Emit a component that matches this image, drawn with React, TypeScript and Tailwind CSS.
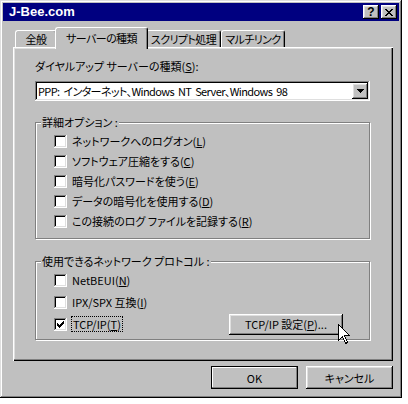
import React from "react";

const jp = "[font-family:'Noto_Sans_CJK_JP','Noto_Sans',sans-serif] [font-feature-settings:'palt']";
const raisedBtn =
  "shadow-[inset_-1px_-1px_0_#000,inset_1px_1px_0_#fff,inset_-2px_-2px_0_#808080,inset_2px_2px_0_#dfdfdf]";
const sunken =
  "shadow-[inset_-1px_-1px_0_#fff,inset_1px_1px_0_#808080,inset_-2px_-2px_0_#dfdfdf,inset_2px_2px_0_#000]";
const etched = "border border-[#808080] shadow-[1px_1px_0_#fff,inset_1px_1px_0_#fff]";

function Key({ k }: { k: string }) {
  return (
    <>
      (<span className="underline underline-offset-[1px]">{k}</span>)
    </>
  );
}

function CheckBox({ checked }: { checked?: boolean }) {
  return (
    <span className={`relative inline-block h-[13px] w-[13px] shrink-0 bg-white ${sunken}`}>
      {checked ? (
        <svg className="absolute left-[3px] top-[3px]" width="7" height="7" viewBox="0 0 7 7" shapeRendering="crispEdges">
          <rect x="6" y="0" width="1" height="1" />
          <rect x="5" y="1" width="2" height="1" />
          <rect x="0" y="2" width="1" height="1" />
          <rect x="4" y="2" width="3" height="1" />
          <rect x="0" y="3" width="2" height="1" />
          <rect x="3" y="3" width="3" height="1" />
          <rect x="0" y="4" width="5" height="1" />
          <rect x="1" y="5" width="3" height="1" />
          <rect x="2" y="6" width="1" height="1" />
        </svg>
      ) : null}
    </span>
  );
}

function Option({ children, checked, focus }: { children: React.ReactNode; checked?: boolean; focus?: boolean }) {
  return (
    <div className="flex items-center gap-[5px]">
      <CheckBox checked={checked} />
      <span className={focus ? "px-[1px] outline outline-1 outline-dotted outline-black" : ""}>{children}</span>
    </div>
  );
}

function Tab({ label, active, w }: { label: string; active?: boolean; w: string }) {
  return (
    <div
      className={`${w} flex items-start justify-center whitespace-nowrap rounded-t-[3px] border-l border-t border-r border-l-white border-t-white border-r-black bg-[#c0c0c0] shadow-[inset_-1px_0_0_#808080] ${
        active ? "relative z-10 -mx-[2px] -mb-[2px] h-[22px] pt-[3px]" : "h-[17px] pt-[1px]"
      }`}
    >
      {label}
    </div>
  );
}

export default function App() {
  return (
    <div className={`h-[404px] w-[408px] bg-white text-[11px] leading-[14px] text-black ${jp}`}>
      <div
        className={`flex h-[398px] w-[402px] flex-col bg-[#c0c0c0] p-[3px] shadow-[inset_-1px_-1px_0_#000,inset_1px_1px_0_#dfdfdf,inset_-2px_-2px_0_#808080,inset_2px_2px_0_#fff]`}
      >
        {/* title bar */}
        <div className="flex h-[18px] items-center bg-[#000080] pl-[6px] pr-[2px]">
          <span className="flex-1 [font-family:'Liberation_Sans',sans-serif] text-[13px] font-bold text-white">
            J-Bee.com
          </span>
          <div className={`flex h-[14px] w-[16px] items-center justify-center ${raisedBtn} bg-[#c0c0c0]`}>
            <span className="[font-family:'Liberation_Sans',sans-serif] text-[12px] font-bold leading-[12px]">?</span>
          </div>
          <div className={`ml-[2px] flex h-[14px] w-[16px] items-center justify-center ${raisedBtn} bg-[#c0c0c0]`}>
            <svg width="8" height="7" viewBox="0 0 8 7" shapeRendering="crispEdges">
              <path d="M0 0h2v1H0zM6 0h2v1H6zM1 1h2v1H1zM5 1h2v1H5zM2 2h4v1H2zM3 3h2v1H3zM2 4h4v1H2zM1 5h2v1H1zM5 5h2v1H5zM0 6h2v1H0zM6 6h2v1H6z" />
            </svg>
          </div>
        </div>

        <div className="flex flex-col pl-[10px] pt-[6px]">
          {/* tabs */}
          <div className="flex h-[20px] items-end pl-[2px] text-[11px] tracking-[-0.6px]">
            <Tab label="全般" w="w-[42px]" />
            <Tab label="サーバーの種類" w="w-[93px]" active />
            <Tab label="スクリプト処理" w="w-[75px]" />
            <Tab label="マルチリンク" w="w-[64px]" />
          </div>

          {/* panel */}
          <div className="h-[314px] w-[380px] bg-[#c0c0c0] pl-[22px] pr-[23px] pt-[12px] shadow-[inset_1px_1px_0_#fff,inset_-1px_-1px_0_#000,inset_-2px_-2px_0_#808080,inset_2px_2px_0_#dfdfdf]">
            <div>
              ダイヤルアップ サーバーの種類<Key k="S" />:
            </div>
            <div className={`mt-[8px] flex h-[20px] items-center bg-white pl-[3px] pr-[2px] ${sunken}`}>
              <span className="flex-1 tracking-[-0.6px] [word-spacing:2px]">PPP: インターネット、Windows NT Server、Windows 98</span>
              <div className={`flex h-[16px] w-[16px] items-center justify-center bg-[#c0c0c0] ${raisedBtn}`}>
                <svg width="7" height="4" viewBox="0 0 7 4" shapeRendering="crispEdges">
                  <path d="M0 0h7v1H0zM1 1h5v1H1zM2 2h3v1H2zM3 3h1v1H3z" />
                </svg>
              </div>
            </div>

            <fieldset className={`mt-[14px] ${etched} pb-[7px] pl-[5px]`}>
              <legend className="bg-[#c0c0c0] px-[1px]">詳細オプション :</legend>
              <div className="flex flex-col pl-[13px] pt-[2px]">
                <div className="flex h-[20px] items-center">
                  <Option>ネットワークへのログオン<Key k="L" /></Option>
                </div>
                <div className="flex h-[20px] items-center">
                  <Option>ソフトウェア圧縮をする<Key k="C" /></Option>
                </div>
                <div className="flex h-[20px] items-center">
                  <Option>暗号化パスワードを使う<Key k="E" /></Option>
                </div>
                <div className="flex h-[20px] items-center">
                  <Option>データの暗号化を使用する<Key k="D" /></Option>
                </div>
                <div className="flex h-[20px] items-center">
                  <Option>この接続のログ ファイルを記録する<Key k="R" /></Option>
                </div>
              </div>
            </fieldset>

            <fieldset className={`mt-[15px] ${etched} pb-[4px] pl-[5px]`}>
              <legend className="bg-[#c0c0c0] px-[1px]">使用できるネットワーク プロトコル :</legend>
              <div className="flex flex-col pl-[13px] pt-[1px]">
                <div className="flex h-[22px] items-center">
                  <Option>NetBEUI<Key k="N" /></Option>
                </div>
                <div className="flex h-[22px] items-center">
                  <Option>IPX/SPX 互換<Key k="I" /></Option>
                </div>
                <div className="relative flex h-[22px] items-center justify-between pr-[26px]">
                  <Option checked focus>TCP/IP<Key k="T" /></Option>
                  <div className={`flex h-[21px] w-[114px] items-center justify-center ${raisedBtn}`}>
                    TCP/IP 設定<Key k="P" />...
                  </div>
                  <svg className="absolute left-[284px] top-[11px]" width="13" height="21" viewBox="0 0 13 21" shapeRendering="crispEdges">
                    <path d="M0.5 0.5 V16.5 L4.5 12.5 L7.5 19.5 L9.5 18.5 L6.5 11.5 H11.5 Z" fill="#fff" stroke="#000" strokeWidth="1" />
                  </svg>
                </div>
              </div>
            </fieldset>
          </div>

          {/* dialog buttons */}
          <div className="mt-[5px] flex w-[380px] justify-end gap-[8px]">
            <div className="flex h-[23px] w-[87px] items-center justify-center border border-black shadow-[inset_-1px_-1px_0_#808080,inset_1px_1px_0_#fff]">
              OK
            </div>
            <div className={`flex h-[23px] w-[87px] items-center justify-center ${raisedBtn}`}>キャンセル</div>
          </div>
        </div>
      </div>
    </div>
  );
}
